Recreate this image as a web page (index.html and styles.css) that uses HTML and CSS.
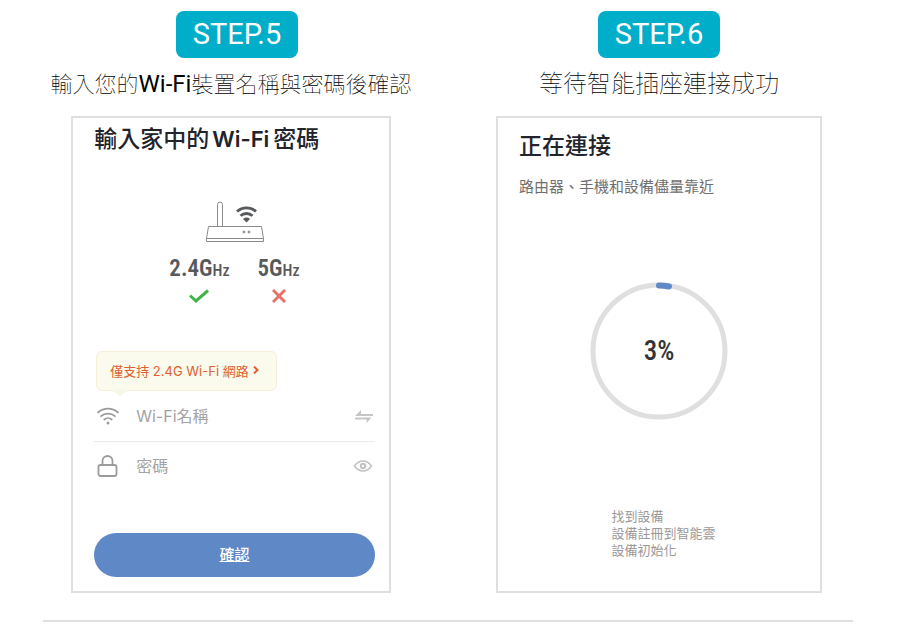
FILE: index.html
```html
<!DOCTYPE html>
<html lang="zh-Hant">

<head>
    <meta charset="UTF-8">
    <meta name="viewport" content="width=device-width, initial-scale=1">
    <title>智能插座連接步驟</title>
    <link rel="stylesheet" href="styles.css">
</head>

<body>
    <main class="steps">
        <section class="step">
            <h2 class="badge">STEP.5</h2>
            <div class="step-body step-wifi">
                <p class="caption">輸入您的<span class="latin">Wi-Fi</span>裝置名稱與密碼後確認</p>
                <form class="card">
                    <h3>輸入家中的<span>Wi-Fi</span>密碼</h3>

                    <svg class="router" width="60" height="42" viewBox="0 0 60 42" fill="none" stroke="#8a8a8c">
                        <path d="M12.500 26V3.500a2.500 2.500 0 0 1 5 0V26" />
                        <path d="M3.500 25.500h53l2 12v3h-57v-3z" fill="#fff" />
                        <path d="M1.500 37.500h57" />
                        <circle cx="39" cy="31" r="1" fill="#aaa" />
                        <circle cx="44" cy="31" r="1" fill="#aaa" />
                        <g stroke="#58595b" stroke-width="2.800">
                            <path d="M32 10.500a14 14 0 0 1 19 0" />
                            <path d="M35.500 14.800a9 9 0 0 1 12 0" />
                        </g>
                        <path d="M38 18q3.500-2.800 7 0L41.500 21.500z" fill="#58595b" stroke="none" />
                    </svg>

                    <div class="bands">
                        <div class="band">
                            <span>2.4G<small>Hz</small></span>
                            <svg width="20" height="14" viewBox="0 0 20 14" fill="none" stroke="#3fb549" stroke-width="3">
                                <path d="M1 6.500l6 5.500L19 1.500" />
                            </svg>
                        </div>
                        <div class="band">
                            <span>5G<small>Hz</small></span>
                            <svg width="14" height="14" viewBox="0 0 14 14" fill="none" stroke="#ec7068" stroke-width="3">
                                <path d="M1 1l12 12M13 1L1 13" />
                            </svg>
                        </div>
                    </div>

                    <a class="tip" href="#">僅支持 2.4G Wi-Fi 網路
                        <svg width="6" height="8" viewBox="0 0 6 8" fill="none" stroke="#e0602f" stroke-width="2">
                            <path d="M1 .5L4.500 4 1 7.500" />
                        </svg>
                    </a>

                    <div class="field">
                        <label for="ssid" aria-label="Wi-Fi名稱">
                            <svg width="24" height="18" viewBox="0 0 24 18" fill="none" stroke="#9b9b9d" stroke-width="1.800" stroke-linecap="round">
                                <path d="M2 5.500a15 15 0 0 1 20 0" />
                                <path d="M5 9.200a10.500 10.500 0 0 1 14 0" />
                                <path d="M8.300 12.500a5.500 5.500 0 0 1 7.400 0" />
                                <circle cx="12" cy="16" r="1.500" fill="#9b9b9d" stroke="none" />
                            </svg>
                        </label>
                        <input type="text" id="ssid" placeholder="Wi-Fi名稱">
                        <button type="button" class="icon-button" aria-label="切換">
                            <svg width="18" height="13" viewBox="0 0 18 13" fill="#c6c6c8">
                                <path d="M0 6L6 0v4h12v2z" />
                                <path d="M0 7.500h16.500L11.500 13V9.500H0z" />
                            </svg>
                        </button>
                    </div>
                    <div class="field">
                        <label for="password" aria-label="密碼">
                            <svg width="24" height="22" viewBox="0 0 24 22" fill="none" stroke="#9b9b9d" stroke-width="1.800">
                                <rect x="2.500" y="10" width="18" height="11" rx="2" />
                                <path d="M6.500 10V6a5 5 0 0 1 10 0v4" />
                            </svg>
                        </label>
                        <input type="password" id="password" placeholder="密碼">
                        <button type="button" class="icon-button" aria-label="顯示密碼">
                            <svg width="20" height="12" viewBox="0 0 20 12" fill="none" stroke="#c2c2c4" stroke-width="1.600">
                                <path d="M1.500 6Q5 1 10 1t8.500 5Q15 11 10 11T1.500 6z" />
                                <circle cx="10" cy="6" r="2.200" stroke-width="2" />
                            </svg>
                        </button>
                    </div>

                    <button type="submit" class="confirm">確認</button>
                </form>
            </div>
        </section>

        <section class="step">
            <h2 class="badge">STEP.6</h2>
            <div class="step-body step-connect">
                <p class="caption">等待智能插座連接成功</p>
                <div class="card">
                    <h3>正在連接</h3>
                    <p class="hint">路由器、手機和設備儘量靠近</p>
                    <div class="progress">
                        <svg viewBox="0 0 138 138" fill="none" stroke-width="5">
                            <circle cx="69" cy="69" r="66" stroke="#dfdfdf" />
                            <path d="M69 3.500q5 0 10 1" stroke="#5f88c6" stroke-width="6" stroke-linecap="round" />
                        </svg>
                        <span>3%</span>
                    </div>
                    <ul>
                        <li>找到設備</li>
                        <li>設備註冊到智能雲</li>
                        <li>設備初始化</li>
                    </ul>
                </div>
            </div>
        </section>
    </main>
</body>

</html>
```
FILE: styles.css
```css
* {
    box-sizing: border-box;
}

body {
    margin: 0;
    background-color: #fff;
    font-family: Inter, "Noto Sans CJK TC", sans-serif;
    color: #23242b;
}

h2,
h3,
p,
ul {
    margin: 0;
    padding: 0;
}

svg {
    display: block;
    flex: none;
}

.steps {
    display: grid;
    grid-template-columns: 1fr 1fr;
    gap: 34px;
    margin: 0 47px 0 43px;
    padding: 11px 0 27px;
    border-bottom: 2px solid #dfdfdf;
}

.step {
    display: flex;
    flex-direction: column;
    align-items: center;
}

.badge {
    padding: 0 17px;
    border-radius: 8px;
    background-color: #00aeca;
    color: #fff;
    font-family: Roboto, sans-serif;
    font-size: 29px;
    font-weight: 400;
    line-height: 47px;
}

.step-body {
    display: flex;
    flex-direction: column;
    flex: 1;
    align-items: center;
    width: 100%;
}

.step-wifi {
    padding-right: 12px;
}

.caption {
    height: 58px;
    color: #000;
    font-family: "Noto Sans CJK TC", sans-serif;
    font-size: 24px;
    font-weight: 100;
    line-height: 48px;
    white-space: nowrap;
}

.step-wifi .caption {
    font-size: 22px;
}

.latin {
    font-family: Roboto, sans-serif;
    font-size: 24px;
    font-weight: 400;
}

.card {
    display: flex;
    flex-direction: column;
    flex: 1;
    width: 85%;
    min-height: 477px;
    padding: 5px 14px 14px 21px;
    border: 2px solid #dfdfdf;
}

.card h3 {
    font-size: 23px;
    font-weight: 500;
    line-height: 32px;
    white-space: nowrap;
}

.card h3 span {
    margin: 0 4px 0 3px;
    font-size: 22px;
    font-weight: 600;
}

.router {
    margin: 46px auto 0;
}

.bands {
    display: flex;
    justify-content: center;
    gap: 28px;
    margin-top: 12px;
}

.band {
    display: flex;
    flex-direction: column;
    align-items: center;
    gap: 4px;
    color: #58595b;
    font-family: "Roboto Condensed", "Liberation Sans Narrow", Roboto, sans-serif;
    font-size: 23px;
    font-weight: 600;
    line-height: 28px;
}

.band small {
    font-size: 16px;
    font-weight: 500;
}

.tip {
    position: relative;
    display: flex;
    align-items: center;
    align-self: flex-start;
    gap: 4px;
    height: 40px;
    margin: 48px 0 0 2px;
    padding: 0 17px 2px 13px;
    border: 1px solid #f5efd9;
    border-radius: 6px;
    background-color: #fafaed;
    color: #e0602f;
    font-size: 13px;
    text-decoration: none;
    white-space: nowrap;
}

/* little arrow under the tip */
.tip::after {
    content: "";
    position: absolute;
    top: 100%;
    left: 14px;
    border: 9px solid transparent;
    border-top: 6px solid #f8f7e6;
    border-bottom: 0;
}

.field {
    display: flex;
    align-items: center;
    height: 48px;
    padding: 0 2px;
}

.tip + .field {
    height: 51px;
    border-bottom: 1px solid #ebebeb;
}

.field input {
    flex: 1;
    min-width: 0;
    margin-left: 16px;
    padding: 0;
    border: none;
    background: none;
    font-family: inherit;
    font-size: 16px;
}

.field input::placeholder {
    color: #a3a3a5;
    opacity: 1;
}

.icon-button {
    padding: 0;
    border: none;
    background: none;
    cursor: pointer;
}

.confirm {
    height: 44px;
    margin-top: auto;
    padding: 0 0 3px;
    border: none;
    border-radius: 22px;
    background-color: #5f88c6;
    color: #fff;
    font-family: inherit;
    font-size: 15px;
    font-weight: 500;
    text-decoration: underline;
    cursor: pointer;
}

.step-connect .card {
    width: 84%;
    padding: 12px 21px 32px;
}

.hint {
    margin-top: 13px;
    color: #707070;
    font-size: 15px;
    line-height: 24px;
    white-space: nowrap;
}

.progress {
    display: grid;
    place-items: center;
    align-self: center;
    width: 138px;
    margin-top: 83px;
}

.progress svg,
.progress span {
    grid-area: 1 / 1;
}

.progress svg {
    width: 100%;
}

.progress span {
    color: #333;
    font-family: "Roboto Condensed", "Liberation Sans Narrow", Roboto, sans-serif;
    font-size: 27px;
    font-weight: 500;
}

.step-connect ul {
    margin: auto 0 0 33%;
    color: #999;
    font-size: 13px;
    line-height: 17px;
    list-style: none;
}
```
